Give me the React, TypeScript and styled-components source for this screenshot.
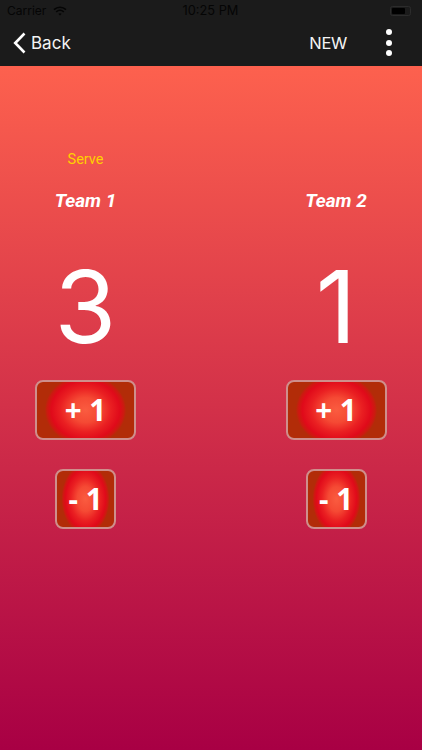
import React from "react";
import styled, { createGlobalStyle } from "styled-components";

const Global = createGlobalStyle`
  html, body { margin: 0; padding: 0; background: #a80044; }
  body { font-family: Roboto, "Liberation Sans", sans-serif; }
  * { box-sizing: border-box; }
`;

const Page = styled.div`
  width: 422px;
  height: 750px;
  display: flex;
  flex-direction: column;
  overflow: hidden;
`;

const Header = styled.header`
  height: 66px;
  flex: none;
  background: #1b1b1b;
  display: flex;
  flex-direction: column;
`;

const StatusBar = styled.div`
  height: 21px;
  padding: 0 11px 0 7px;
  display: grid;
  grid-template-columns: 1fr auto 1fr;
  align-items: center;
  font: 400 12px Inter, "Liberation Sans", sans-serif;
  color: #050505;
`;

const StatusLeft = styled.div`
  display: flex;
  align-items: center;
  gap: 7px;
`;

const Clock = styled.span`
  font-size: 12.8px;
  margin-left: 3px;
`;

const StatusRight = styled.div`
  display: flex;
  justify-content: flex-end;
  align-items: center;
`;

const Battery = styled.div`
  width: 21px;
  height: 10px;
  border: 1px solid #2c2c2c;
  border-radius: 2.5px;
  padding: 1px;
  display: flex;
`;

const BatteryFill = styled.div`
  width: 13px;
  background: #000;
  border-radius: 1px;
`;

const NavBar = styled.nav`
  flex: 1;
  display: flex;
  align-items: center;
  padding: 0 30px 2px 13px;
  color: #fff;
`;

const BackLink = styled.div`
  display: flex;
  align-items: center;
  gap: 5px;
  font: 400 17px Inter, Roboto, sans-serif;
  color: #f4f4f4;
`;

const NewLabel = styled.div`
  margin-left: auto;
  font: 400 16.5px Inter, Roboto, sans-serif;
  letter-spacing: -0.3px;
  color: #f4f4f4;
`;

const MenuDots = styled.div`
  margin-left: 39px;
  width: 6px;
  display: flex;
  flex-direction: column;
  gap: 4.5px;
`;

const Dot = styled.span`
  width: 6px;
  height: 6px;
  border-radius: 50%;
  background: #fff;
`;

const Board = styled.main`
  flex: 1;
  background: linear-gradient(180deg, #fd614e 0%, #a80044 100%);
  display: grid;
  grid-template-columns: 120px 120px;
  justify-content: space-between;
  padding: 85px 26px 0 25.5px;
  align-content: start;
`;

const TeamColumn = styled.section`
  display: flex;
  flex-direction: column;
  align-items: center;
`;

const ServeLabel = styled.div<{ $visible: boolean }>`
  height: 18px;
  line-height: 18px;
  font-size: 14.5px;
  color: #ffd000;
  visibility: ${(p) => (p.$visible ? "visible" : "hidden")};
`;

const TeamName = styled.h2`
  margin: 20px 0 0;
  height: 24px;
  line-height: 24px;
  font-size: 19px;
  font-weight: 700;
  font-style: italic;
  color: #fff;
  white-space: nowrap;
`;

const Score = styled.div`
  margin-top: 32px;
  height: 124px;
  line-height: 124px;
  font-family: Inter, Roboto, sans-serif;
  font-size: 100px;
  font-weight: 400;
  color: #fff;
`;

const ScoreButton = styled.button<{ $wide?: boolean }>`
  width: ${(p) => (p.$wide ? "101px" : "61px")};
  height: 60px;
  margin-top: ${(p) => (p.$wide ? "11px" : "29px")};
  padding: 0 0 2px;
  border: 2px solid #cf8f8c;
  border-radius: 8px;
  background: radial-gradient(
    ellipse 42% 63% at center,
    #fa5c40 0%,
    #f54a34 35%,
    #ea2022 62%,
    #e00a1a 84%,
    #cc1a10 94%,
    #b22c08 100%
  );
  color: #fff;
  font: 700 29.5px "Open Sans", "Liberation Sans", sans-serif;
  display: flex;
  align-items: center;
  justify-content: center;
`;

function Team({ name, score, serve }: { name: string; score: number; serve?: boolean }) {
  return (
    <TeamColumn>
      <ServeLabel $visible={!!serve}>Serve</ServeLabel>
      <TeamName>{name}</TeamName>
      <Score>{score}</Score>
      <ScoreButton $wide>+ 1</ScoreButton>
      <ScoreButton>- 1</ScoreButton>
    </TeamColumn>
  );
}

export default function App() {
  return (
    <Page>
      <Global />
      <Header>
        <StatusBar>
          <StatusLeft>
            <span>Carrier</span>
            <svg width="14" height="10" viewBox="0 0 14 10" fill="none" stroke="#050505" strokeWidth="1.6">
              <path d="M1 3.6C4.5.5 9.5.5 13 3.6" />
              <path d="M3.2 5.8C5.4 4 8.6 4 10.8 5.8" />
              <path d="M7 9.6 5.3 7.8c1-.7 2.4-.7 3.4 0z" fill="#050505" stroke="none" />
            </svg>
          </StatusLeft>
          <Clock>10:25 PM</Clock>
          <StatusRight>
            <Battery>
              <BatteryFill />
            </Battery>
          </StatusRight>
        </StatusBar>
        <NavBar>
          <BackLink>
            <svg width="13" height="22" viewBox="0 0 13 22" fill="none" stroke="#fff" strokeWidth="2.6">
              <path d="M11.5 1.5 2.2 11l9.3 9.5" />
            </svg>
            <span>Back</span>
          </BackLink>
          <NewLabel>NEW</NewLabel>
          <MenuDots>
            <Dot />
            <Dot />
            <Dot />
          </MenuDots>
        </NavBar>
      </Header>
      <Board>
        <Team name="Team 1" score={3} serve />
        <Team name="Team 2" score={1} />
      </Board>
    </Page>
  );
}
